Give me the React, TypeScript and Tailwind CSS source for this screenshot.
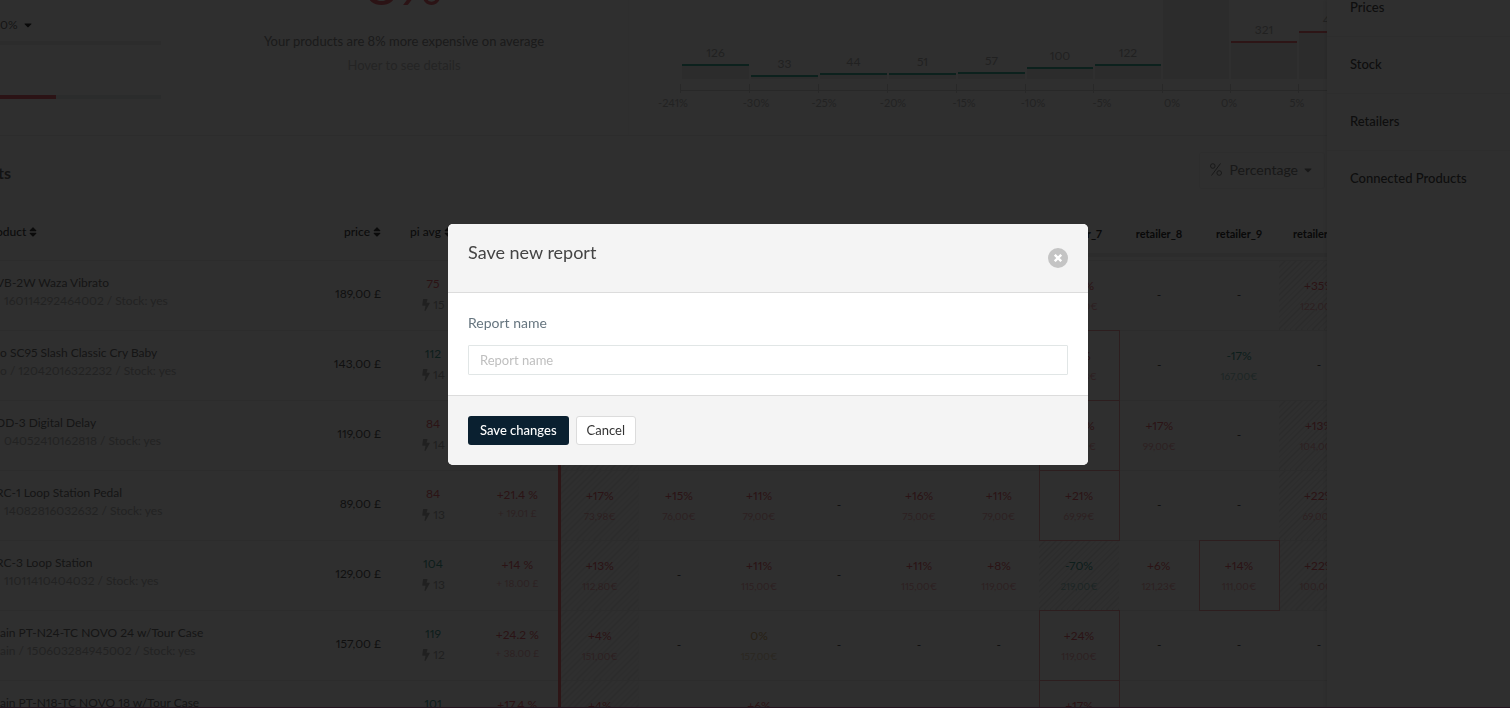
import { clsx } from "clsx";
import { FaBolt, FaCaretDown, FaSort } from "react-icons/fa";

type Tone = "up" | "down" | "even";

interface Cell {
  pct: string;
  price: string;
  tone?: Tone;
  boxed?: boolean;
  striped?: boolean;
}

interface Product {
  name: string;
  meta: string;
  indent?: boolean;
  price: string;
  index: number;
  matches: number;
  diff: string;
  diffPrice: string;
  cells: (Cell | null)[];
}

const NAV_ITEMS = ["Prices", "Stock", "Retailers", "Connected Products"];

const RETAILERS = [
  "retailer_1",
  "retailer_2",
  "retailer_3",
  "retailer_4",
  "retailer_5",
  "retailer_6",
  "retailer_7",
  "retailer_8",
  "retailer_9",
  "retailer_10",
];

const BARS = [
  { x: 53, w: 67, y: 64, label: "126", fill: "#14a088" },
  { x: 122, w: 67, y: 75, label: "33", fill: "#14a088" },
  { x: 191, w: 67, y: 73, label: "44", fill: "#14a088" },
  { x: 260, w: 67, y: 73, label: "51", fill: "#14a088" },
  { x: 329, w: 67, y: 72, label: "57", fill: "#14a088" },
  { x: 398, w: 66, y: 67, label: "100", fill: "#14a088" },
  { x: 466, w: 66, y: 64, label: "122", fill: "#14a088" },
  { x: 534, w: 66, y: -40, label: "", fill: "#14a088" },
  { x: 602, w: 66, y: 41, label: "321", fill: "#f0505a" },
  { x: 670, w: 66, y: 31, label: "412", fill: "#f0505a" },
];

const TICKS = [
  { x: 51, text: 44, label: "-241%" },
  { x: 120, text: 127, label: "-30%" },
  { x: 189, text: 195, label: "-25%" },
  { x: 258, text: 264, label: "-20%" },
  { x: 327, text: 335, label: "-15%" },
  { x: 396, text: 404, label: "-10%" },
  { x: 464, text: 473, label: "-5%" },
  { x: 533, text: 543, label: "0%" },
  { x: 601, text: 600, label: "0%" },
  { x: 669, text: 668, label: "5%" },
];

const PRODUCTS: Product[] = [
  {
    name: "VB-2W Waza Vibrato",
    meta: "160114292464002 / Stock: yes",
    indent: true,
    price: "189,00 £",
    index: 75,
    matches: 15,
    diff: "+33.3 %",
    diffPrice: "+ 63.00 £",
    cells: [
      { pct: "+30%", price: "132,00€", striped: true },
      null,
      { pct: "+28%", price: "136,00€" },
      null,
      { pct: "+25%", price: "141,00€" },
      null,
      { pct: "+32%", price: "129,00€" },
      null,
      null,
      { pct: "+35%", price: "122,00€", striped: true },
    ],
  },
  {
    name: "o SC95 Slash Classic Cry Baby",
    meta: "o / 12042016322232 / Stock: yes",
    price: "143,00 £",
    index: 112,
    matches: 14,
    diff: "+8.4 %",
    diffPrice: "+ 12.00 £",
    cells: [
      { pct: "+5%", price: "136,00€", striped: true },
      null,
      null,
      null,
      { pct: "+4%", price: "137,00€" },
      null,
      { pct: "+9%", price: "129,98€", boxed: true },
      null,
      { pct: "-17%", price: "167,00€", tone: "down" },
      null,
    ],
  },
  {
    name: "DD-3 Digital Delay",
    meta: "04052410162818 / Stock: yes",
    indent: true,
    price: "119,00 £",
    index: 84,
    matches: 14,
    diff: "+19 %",
    diffPrice: "+ 23.00 £",
    cells: [
      { pct: "+16%", price: "99,90€", striped: true },
      null,
      { pct: "+13%", price: "104,00€" },
      null,
      { pct: "+16%", price: "99,00€" },
      null,
      { pct: "+20%", price: "95,00€", boxed: true },
      { pct: "+17%", price: "99,00€" },
      null,
      { pct: "+13%", price: "104,00€", striped: true },
    ],
  },
  {
    name: "RC-1 Loop Station Pedal",
    meta: "14082816032632 / Stock: yes",
    indent: true,
    price: "89,00 £",
    index: 84,
    matches: 13,
    diff: "+21.4 %",
    diffPrice: "+ 19.01 £",
    cells: [
      { pct: "+17%", price: "73,98€", striped: true },
      { pct: "+15%", price: "76,00€" },
      { pct: "+11%", price: "79,00€" },
      null,
      { pct: "+16%", price: "75,00€" },
      { pct: "+11%", price: "79,00€" },
      { pct: "+21%", price: "69,99€", boxed: true },
      null,
      null,
      { pct: "+22%", price: "69,00€", striped: true },
    ],
  },
  {
    name: "RC-3 Loop Station",
    meta: "11011410404032 / Stock: yes",
    indent: true,
    price: "129,00 £",
    index: 104,
    matches: 13,
    diff: "+14 %",
    diffPrice: "+ 18.00 £",
    cells: [
      { pct: "+13%", price: "112,80€", striped: true },
      null,
      { pct: "+11%", price: "115,00€" },
      null,
      { pct: "+11%", price: "115,00€" },
      { pct: "+8%", price: "119,00€" },
      { pct: "-70%", price: "219,00€", tone: "down", striped: true },
      { pct: "+6%", price: "121,23€" },
      { pct: "+14%", price: "111,00€", boxed: true },
      { pct: "+22%", price: "100,00€", striped: true },
    ],
  },
  {
    name: "ain PT-N24-TC NOVO 24 w/Tour Case",
    meta: "ain / 150603284945002 / Stock: yes",
    price: "157,00 £",
    index: 119,
    matches: 12,
    diff: "+24.2 %",
    diffPrice: "+ 38.00 £",
    cells: [
      { pct: "+4%", price: "151,00€", striped: true },
      null,
      { pct: "0%", price: "157,00€", tone: "even" },
      null,
      null,
      null,
      { pct: "+24%", price: "119,00€", boxed: true },
      null,
      null,
      null,
    ],
  },
  {
    name: "ain PT-N18-TC NOVO 18 w/Tour Case",
    meta: "ain / 150603284945001 / Stock: yes",
    price: "149,00 £",
    index: 101,
    matches: 12,
    diff: "+17.4 %",
    diffPrice: "+ 26.00 £",
    cells: [
      { pct: "+4%", price: "143,00€", striped: true },
      null,
      { pct: "+6%", price: "140,00€" },
      null,
      null,
      null,
      { pct: "+17%", price: "123,00€", boxed: true },
      null,
      null,
      null,
    ],
  },
];

const TONES: Record<Tone, string> = {
  up: "text-[#e04650]",
  down: "text-[#208a7c]",
  even: "text-[#c79a50]",
};

function PriceIndexChart() {
  return (
    <svg
      width="760"
      height="135"
      className="block max-w-none"
      fontSize="12"
      textAnchor="middle"
      role="img"
      aria-label="Products by price difference"
    >
      {BARS.map((bar) => (
        <g key={bar.x}>
          <rect x={bar.x} y={bar.y} width={bar.w} height={79 - bar.y} fill="#ebebeb" />
          <rect x={bar.x} y={bar.y} width={bar.w} height="2" fill={bar.fill} />
          <text x={bar.x + bar.w / 2} y={bar.y - 7} fill="#a0a0a0">
            {bar.label}
          </text>
        </g>
      ))}
      <path d="M51 90.5H760" stroke="#cfcfcf" />
      {TICKS.map((tick) => (
        <g key={tick.x}>
          <path d={`M${tick.x}.5 84v9`} stroke="#cfcfcf" />
          <text x={tick.text} y="107" fontSize="11" fill="#aaa">
            {tick.label}
          </text>
        </g>
      ))}
    </svg>
  );
}

function SortHeader({ label }: { label: string }) {
  return (
    <button className="inline-flex items-center gap-[3px] whitespace-nowrap">
      {label}
      <FaSort className="w-2 h-3" />
    </button>
  );
}

function RetailerCell({ cell }: { cell: Cell | null }) {
  if (!cell) {
    return <td className="text-center text-[#222]">-</td>;
  }
  return (
    <td
      className={clsx(
        "pt-0.5 text-center leading-5",
        TONES[cell.tone ?? "up"],
        cell.boxed && "border border-[#f08a92]",
        cell.striped &&
          "bg-[repeating-linear-gradient(135deg,#e4e4e4_0px,#e4e4e4_1px,transparent_1px,transparent_4px)]"
      )}
    >
      <div>{cell.pct}</div>
      <div className="text-[10px] leading-5 opacity-55">{cell.price}</div>
    </td>
  );
}

function ProductTable() {
  return (
    <table className="w-[1359px] table-fixed border-collapse text-xs">
      <colgroup>
        <col className="w-[300px]" />
        <col className="w-[81px]" />
        <col className="w-[104px]" />
        <col className="w-[74px]" />
        {RETAILERS.map((name) => (
          <col key={name} className="w-[80px]" />
        ))}
      </colgroup>
      <thead>
        <tr className="h-[55px] text-[#111]">
          <th className="text-left font-medium">
            <div className="-ml-1">
              <SortHeader label="oduct" />
            </div>
          </th>
          <th className="text-right font-medium">
            <SortHeader label="price" />
          </th>
          <th className="pr-1 text-center font-medium">
            <SortHeader label="pi avg" />
          </th>
          <th className="text-center font-medium">
            <SortHeader label="diff" />
          </th>
          {RETAILERS.map((name) => (
            <th key={name} className="p-0 align-top text-[11px] font-bold text-black">
              <div className="h-12 pt-5 leading-[18px]">{name}</div>
              <div className="h-1 bg-[#ececec]" />
            </th>
          ))}
        </tr>
      </thead>
      <tbody>
        {PRODUCTS.map((product) => (
          <tr key={product.name} className="h-[70px] border-t border-[#ececec]">
            <td className="whitespace-nowrap pb-1.5 leading-[18px]">
              <div className={clsx("text-[#555]", product.indent && "-ml-1")}>
                {product.name}
              </div>
              <div className={clsx("text-[#aaa]", product.indent && "pl-1")}>
                {product.meta}
              </div>
            </td>
            <td className="whitespace-nowrap pb-0.5 text-right text-[#333]">{product.price}</td>
            <td className="pb-0.5 text-center leading-[21px]">
              <div className={product.index < 100 ? TONES.up : TONES.down}>
                {product.index}
              </div>
              <div className="flex items-center justify-center gap-0.5 text-[#999]">
                <FaBolt className="w-2.5 h-3" />
                {product.matches}
              </div>
            </td>
            <td className="border-r-[3px] border-[#f0505a] pr-2 pb-0.5 text-center leading-[19px] text-[#e04650]">
              <div>{product.diff}</div>
              <div className="text-[10px] leading-[19px] opacity-50">{product.diffPrice}</div>
            </td>
            {product.cells.map((cell, i) => (
              <RetailerCell key={RETAILERS[i]} cell={cell} />
            ))}
          </tr>
        ))}
      </tbody>
    </table>
  );
}

function SaveReportDialog() {
  return (
    <div className="fixed inset-0 z-50 flex items-start justify-center overflow-hidden border-b border-[#241420] bg-[#0a0a0a]/85 pt-[224px] pr-4 pl-[42px]">
      <form
        role="dialog"
        aria-modal="true"
        aria-labelledby="dialog-title"
        onSubmit={(e) => e.preventDefault()}
        className="w-full max-w-[640px] overflow-hidden rounded-[5px] bg-white"
      >
        <header className="flex items-start justify-between border-b border-[#dcdcdc] bg-[#f4f4f4] px-5 pt-5 pb-6">
          <h2 id="dialog-title" className="text-lg leading-4 text-[#444]">
            Save new report
          </h2>
          <button
            type="button"
            aria-label="Close"
            className="mt-1 flex h-5 w-5 items-center justify-center rounded-full bg-[#c4c4c4] text-white"
          >
            <svg width="8" height="8" viewBox="0 0 8 8" stroke="currentColor" strokeWidth="2.4">
              <path d="M.8 .8l6.4 6.4M7.2 .8L.8 7.2" />
            </svg>
          </button>
        </header>
        <div className="p-5">
          <label htmlFor="report-name" className="block text-sm leading-5 text-[#66757f]">
            Report name
          </label>
          <input
            id="report-name"
            type="text"
            placeholder="Report name"
            className="mt-3 block h-[30px] w-full rounded-[1px] border border-[#e1e6e6] px-[11px] text-[13px] text-[#333] outline-none placeholder:text-[#bfbfbf]"
          />
        </div>
        <footer className="flex gap-[7px] border-t border-[#dcdcdc] bg-[#f4f4f4] p-5">
          <button
            type="submit"
            className="h-[29px] rounded-[3px] bg-[#0a2030] px-3 text-[13px] font-medium text-white"
          >
            Save changes
          </button>
          <button
            type="button"
            className="h-[29px] rounded-[3px] border border-[#dcdcdc] bg-white px-2.5 text-[13px] text-[#333]"
          >
            Cancel
          </button>
        </footer>
      </form>
    </div>
  );
}

export default function App() {
  return (
    <div className="flex h-screen overflow-hidden bg-[#fcfcfc] font-['Lato','Liberation_Sans',sans-serif] proportional-nums">
      <main className="min-w-0 flex-1 overflow-hidden">
        <section className="flex h-[136px] overflow-hidden border-b border-[#ececec]">
          <div className="w-[180px] shrink-0 pt-4">
            <button className="flex h-[18px] items-center gap-1 text-xs text-[#555]">
              0% <FaCaretDown className="w-3 h-3 text-black" />
            </button>
            <div className="mt-[7px] h-1 w-[161px] bg-[#e9e9e9]" />
            <div className="mt-[50px] h-1 w-[161px] bg-[#e4eaea]">
              <div className="h-1 w-14 bg-[#e04650]" />
            </div>
          </div>
          <div className="w-[448px] shrink-0 text-center">
            <div className="-mt-[50px] h-[79px] text-[56px] leading-[68px] text-[#e04650]">8%</div>
            <p className="text-[13px] leading-6 text-[#777]">
              Your products are 8% more expensive on average
            </p>
            <p className="text-[13px] leading-6 text-[#b5b5b5]">Hover to see details</p>
          </div>
          <div className="min-w-0 flex-1 overflow-hidden border-l border-[#f8f8f8]">
            <PriceIndexChart />
          </div>
        </section>

        <section>
          <div className="flex h-[69px] items-center justify-between pr-0.5">
            <h1 className="-ml-0.5 pt-1 text-base font-bold text-[#444]">ts</h1>
            <button className="flex h-[37px] items-center gap-1 rounded-[3px] border border-[#f0f0f0] px-2.5 pb-0.5 text-sm text-[#666]">
              <svg
                width="12"
                height="13"
                viewBox="0 0 12 13"
                fill="none"
                stroke="currentColor"
                className="mr-1"
              >
                <path d="M10.5 .5l-9 12" />
                <circle cx="2.8" cy="3" r="2.3" />
                <circle cx="9.2" cy="10" r="2.3" />
              </svg>
              Percentage
              <FaCaretDown className="w-3 h-3" />
            </button>
          </div>
          <ProductTable />
        </section>
      </main>

      <aside className="w-[183px] shrink-0 overflow-hidden bg-[#fcfcfc] shadow-[0_0_5px_rgba(0,0,0,0.2)]">
        <nav className="-mt-5">
          {NAV_ITEMS.map((item) => (
            <a
              key={item}
              href="#"
              className="flex h-[57px] items-center border-b border-[#eeeeee] pl-[23px] text-[13px] font-medium text-[#222] last:border-transparent"
            >
              {item}
            </a>
          ))}
        </nav>
      </aside>

      <SaveReportDialog />
    </div>
  );
}
